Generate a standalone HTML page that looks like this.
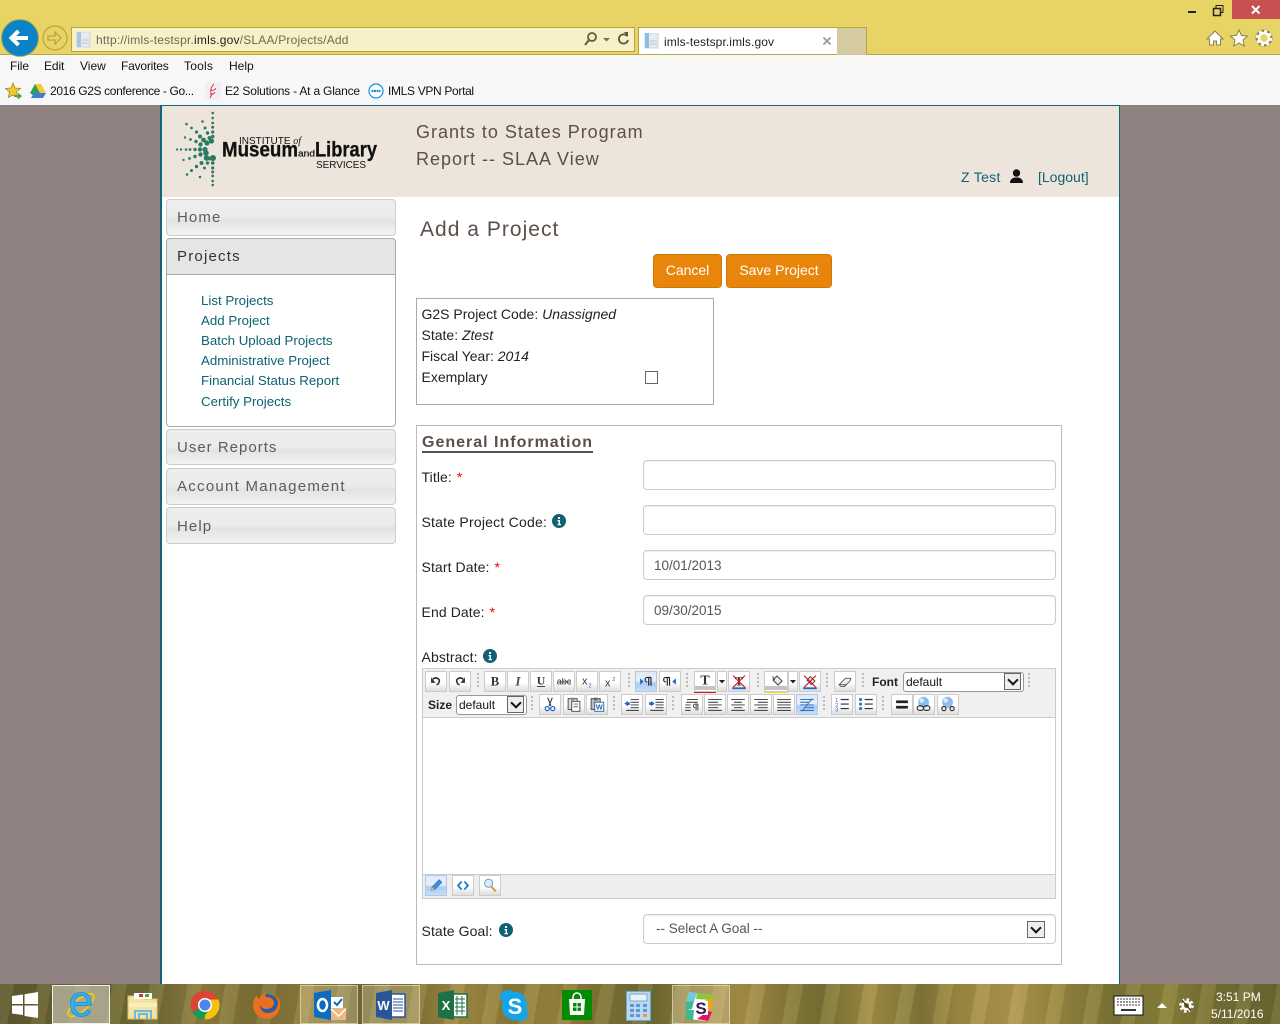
<!DOCTYPE html>
<html><head><meta charset="utf-8"><title>Add a Project</title>
<style>
html,body{margin:0;padding:0}
body{width:1280px;height:1024px;position:relative;overflow:hidden;background:#8f8280;font-family:"Liberation Sans",sans-serif;font-size:14px;color:#222}
.a,.t,.b,.inp,.sep,.dd{position:absolute}
.t{white-space:nowrap;line-height:16px}
.c{font-size:12px;color:#111;font-family:"Liberation Sans",sans-serif}
.f{letter-spacing:-.27px}
.nav{position:absolute;left:166px;width:228px;border:1px solid #ccc;border-radius:4px;background:linear-gradient(#eee 0,#ebebeb 50%,#e2e2e2 58%,#f3f3f3 100%);color:#5c5c5c;font-size:15px;letter-spacing:1.1px;box-sizing:content-box}
.nav span{position:absolute;left:10px;top:9px;line-height:18px}
.l{left:201px;color:#0e6272;font-size:13.3px}
.lb{left:421.500px;letter-spacing:.1px}
.inp{left:643px;width:411px;height:28px;border:1px solid #ccc;border-radius:4px;background:#fff;box-shadow:inset 0 1px 1px rgba(0,0,0,.07);color:#555;font-size:13.500px;line-height:30px;text-indent:10px}
.red{color:#f00}
.b{width:20px;height:19px;border:1px solid #ccc;background:linear-gradient(#fff 0,#fff 55%,#ddd 100%);box-sizing:content-box;overflow:hidden}
.b svg{position:absolute;left:0;top:0;width:20px;height:19px}
.on{background:linear-gradient(#dbe9fb 0,#e8f1fc 45%,#a9cdf6 60%,#c5ddfa 100%);border-color:#b6c8dc}
.sep{width:2px;height:16px;background:repeating-linear-gradient(#bbb 0,#bbb 2px,transparent 2px,transparent 4px)}
.dd{width:17px;height:17px;border:1px solid #666;background:#eee;box-sizing:border-box}
.dd:after{content:"";position:absolute;left:4px;top:2px;width:6px;height:6px;border-right:2px solid #111;border-bottom:2px solid #111;transform:rotate(45deg)}
.i{position:absolute;width:14px;height:14px}
.task{position:absolute}
</style></head>
<body>
<!-- browser chrome -->
<div class="a" style="left:0;top:0;width:1280px;height:54px;background:#e8d464"></div>
<div class="a" style="left:0;top:54px;width:1280px;height:1px;background:#b9a83f"></div>
<div class="a" style="left:0;top:55px;width:1280px;height:50px;background:#f7f7f7"></div>
<div class="a" style="left:0;top:105px;width:1280px;height:1px;background:#8a7f7d"></div>

<svg class="a" style="left:0;top:18px" width="72" height="40">
 <circle cx="20" cy="20" r="18.500" fill="#0a84c6" stroke="#b9a83f" stroke-width="1"/>
 <path d="M28 20H12M18.500 13L11.500 20L18.500 27" fill="none" stroke="#fff" stroke-width="4"/>
 <circle cx="55" cy="20" r="12" fill="#e8d464" stroke="#b5a440" stroke-width="1.200"/>
 <path d="M48 18h7v-4l6 6-6 6v-4h-7z" fill="none" stroke="#b5a440" stroke-width="1.200"/>
</svg>
<div class="a" style="left:71px;top:27px;width:562px;height:23px;background:#f8f0c6;border:1px solid #b5a440"></div>
<svg class="a" style="left:76px;top:32px" width="16" height="16"><rect x="1" y="0" width="13" height="15" fill="#e6ebf2" stroke="#cfd6df"/><rect x="1" y="0" width="4" height="15" fill="#a5c6e6"/><path d="M6 8h7M6 11h7" stroke="#b8c4d2"/></svg>
<div class="t" style="left:96px;top:32px;font-size:12px;letter-spacing:.2px;color:#6d6a55">http://imls-testspr.<span style="color:#222">imls.gov</span>/SLAA/Projects/Add</div>
<svg class="a" style="left:583px;top:30px" width="48" height="18">
 <circle cx="9" cy="7" r="4" fill="none" stroke="#5e5a3c" stroke-width="1.800"/><path d="M6 10L2 15" stroke="#5e5a3c" stroke-width="2"/>
 <path d="M20 8h7l-3.500 3.500z" fill="#76714e"/>
 <path d="M44 6a4.600 4.600 0 1 0 1 4" fill="none" stroke="#5e5a3c" stroke-width="1.800"/><path d="M41 2l4 0 0 5z" fill="#5e5a3c"/>
</svg>
<div class="a" style="left:638px;top:27px;width:198px;height:26px;background:#fff;border:1px solid #b5a440;border-bottom:0;box-sizing:content-box"></div>
<div class="a" style="left:837px;top:27px;width:29px;height:27px;background:#d4cba0;border-right:1px solid #b5a440;border-top:1px solid #b5a440"></div>
<svg class="a" style="left:644px;top:33px" width="16" height="16"><rect x="1" y="0" width="13" height="15" fill="#e6ebf2" stroke="#cfd6df"/><rect x="1" y="0" width="4" height="15" fill="#8fbbe3"/><path d="M6 8h7M6 11h7" stroke="#b8c4d2"/></svg>
<div class="t" style="left:664px;top:34px;font-size:12px;letter-spacing:.1px;color:#222">imls-testspr.imls.gov</div>
<svg class="a" style="left:821px;top:35px" width="12" height="12"><path d="M2.500 2.500l7 7M9.500 2.500l-7 7" stroke="#999" stroke-width="1.800"/></svg>

<div class="a" style="left:1188px;top:11px;width:8px;height:2px;background:#222"></div>
<svg class="a" style="left:1212px;top:4px" width="14" height="14"><rect x="4" y="1.500" width="7" height="7" fill="none" stroke="#222"/><rect x="1.500" y="4.500" width="7" height="7" fill="#e8d464" stroke="#222" stroke-width="1.500"/></svg>
<div class="a" style="left:1232px;top:0;width:48px;height:19px;background:#c75050"></div>
<svg class="a" style="left:1250px;top:4px" width="12" height="12"><path d="M2 2l7.500 7.500M9.500 2L2 9.500" stroke="#fff" stroke-width="2"/></svg>
<svg class="a" style="left:1205px;top:28px" width="70" height="20">
 <path d="M10 3L2 11h2.500v6h4v-4h3v4h4v-6H18z" fill="#fff" stroke="#8c8251" stroke-width="1"/>
 <path d="M34 2l2.500 5.500 6 .6-4.500 4 1.300 6L34 15l-5.300 3 1.300-6-4.500-4 6-.6z" fill="#fff" stroke="#8c8251" stroke-width="1"/>
 <circle cx="59" cy="10" r="7" fill="none" stroke="#8c8251" stroke-width="3"/>
 <circle cx="59" cy="10" r="5" fill="none" stroke="#fff" stroke-width="2.400"/><circle cx="59" cy="10" r="7" fill="none" stroke="#fff" stroke-width="2.400" stroke-dasharray="3 2.500"/>
</svg>

<div class="t c" style="left:10px;top:58px;letter-spacing:-.1px">File</div>
<div class="t c" style="left:44px;top:58px;letter-spacing:-.1px">Edit</div>
<div class="t c" style="left:80px;top:58px">View</div>
<div class="t c" style="left:121px;top:58px;letter-spacing:-.2px">Favorites</div>
<div class="t c" style="left:184px;top:58px;letter-spacing:.2px">Tools</div>
<div class="t c" style="left:229px;top:58px">Help</div>

<svg class="a" style="left:5px;top:82px" width="18" height="18"><path d="M8 1l2 5 5.500.5-4 3.500 1.200 5.500L8 13l-4.700 2.500L4.500 10l-4-3.500L6 6z" fill="#f2c82f" stroke="#a68a1f" stroke-width=".8"/><path d="M9 13h4v-2.500l4 3.500-4 3.500V15H9z" fill="#4aa83d"/></svg>
<svg class="a" style="left:29px;top:83px" width="18" height="16"><path d="M6 1h6l5 9h-6z" fill="#f8c82c"/><path d="M6 1l5 9-3 5L1 10z" fill="#2e9e52"/><path d="M5 10h12l-3 5H2z" fill="#3b7de0"/></svg>
<div class="t c f" style="left:50px;top:83px;letter-spacing:-.36px">2016 G2S conference - Go...</div>
<svg class="a" style="left:205px;top:82px" width="16" height="18"><rect width="16" height="18" fill="#f1eef5"/><path d="M9 2c-4 4-4 8-2 10l-2 4M6 8c2 1 4 0 5-2M5 12c2 1 4 0 5-2" fill="none" stroke="#d8424a" stroke-width="1"/></svg>
<div class="t c f" style="left:225px;top:83px;letter-spacing:-.2px">E2 Solutions - At a Glance</div>
<svg class="a" style="left:368px;top:83px" width="16" height="16"><circle cx="8" cy="8" r="7" fill="#fff" stroke="#1a8fd0" stroke-width="1.200"/><path d="M3.500 8h9" stroke="#1a8fd0" stroke-width="2.200" stroke-dasharray="2 .5"/></svg>
<div class="t c f" style="left:388px;top:83px;letter-spacing:-.33px">IMLS VPN Portal</div>

<!-- page container -->
<div class="a" style="left:160px;top:105px;width:960px;height:879px;background:#fff;box-sizing:border-box;border-left:2px solid #0e6676;border-right:1px solid #0e6676;border-top:1px solid #0e6676"></div>
<div class="a" style="left:162px;top:106px;width:957px;height:91px;background:#ede5db"></div>

<!-- logo -->
<svg class="a" style="left:170px;top:108px" width="215" height="84">
 <g fill="#2d7a63">
  <circle cx="42.700" cy="5" r="1.300"/><circle cx="42.700" cy="10" r="1.300"/><circle cx="42.700" cy="15" r="1.400"/><circle cx="42.700" cy="19.300" r="1.500"/><circle cx="42.700" cy="24" r="1.600"/><circle cx="42.700" cy="28.500" r="1.800"/><circle cx="41.500" cy="33" r="2.600"/>
  <circle cx="43" cy="50" r="3"/><circle cx="42.700" cy="55" r="1.800"/><circle cx="42.700" cy="60" r="1.600"/><circle cx="42.700" cy="64" r="1.500"/><circle cx="42.700" cy="68" r="1.400"/><circle cx="42.700" cy="73" r="1.300"/><circle cx="42.700" cy="77" r="1.300"/>
  <circle cx="7" cy="41.500" r="1.100"/><circle cx="11" cy="41.500" r="1.200"/><circle cx="16" cy="41.500" r="1.300"/><circle cx="20" cy="41.500" r="1.400"/><circle cx="25" cy="41.500" r="1.700"/><circle cx="30" cy="41.500" r="2.200"/><circle cx="35" cy="41.500" r="2.600"/>
  <circle cx="16.500" cy="16" r="1.300"/><circle cx="21.500" cy="20" r="1.400"/><circle cx="26.500" cy="24" r="1.600"/><circle cx="30" cy="28.500" r="2"/><circle cx="33.500" cy="32" r="2.400"/><circle cx="37" cy="35" r="2.600"/>
  <circle cx="32.500" cy="13.500" r="1.300"/><circle cx="35" cy="20" r="1.500"/><circle cx="37.500" cy="25" r="1.700"/><circle cx="39.500" cy="30" r="2"/>
  <circle cx="15" cy="29.500" r="1.200"/><circle cx="20.500" cy="31.500" r="1.400"/><circle cx="26" cy="33.500" r="1.700"/><circle cx="30.500" cy="36.500" r="2.200"/>
  <circle cx="13.500" cy="52" r="1.200"/><circle cx="19.500" cy="50.500" r="1.400"/><circle cx="25" cy="48.500" r="1.700"/><circle cx="30.500" cy="46.500" r="2.200"/><circle cx="36" cy="45" r="2.800"/>
  <circle cx="17" cy="66.500" r="1.300"/><circle cx="21.500" cy="62.500" r="1.500"/><circle cx="26.500" cy="58.500" r="1.700"/><circle cx="31.500" cy="55" r="2"/><circle cx="36.500" cy="50" r="2.800"/>
  <circle cx="30" cy="69" r="1.300"/><circle cx="34.500" cy="60" r="1.500"/><circle cx="37.500" cy="55" r="1.700"/><circle cx="40" cy="50.500" r="2"/>
 </g>
 <text x="69" y="36" font-family="Liberation Sans" font-size="10" fill="#111" textLength="62" lengthAdjust="spacingAndGlyphs">INSTITUTE <tspan font-style="italic" font-family="Liberation Serif">of</tspan></text>
 <text x="52" y="48.500" font-family="Liberation Sans" font-size="21.500" font-weight="bold" fill="#111" stroke="#111" stroke-width=".3" textLength="76" lengthAdjust="spacingAndGlyphs">Museum</text>
 <text x="128" y="48.500" font-family="Liberation Sans" font-size="9" fill="#111" stroke="#111" stroke-width=".2" textLength="17" lengthAdjust="spacingAndGlyphs">and</text>
 <text x="145" y="48.500" font-family="Liberation Sans" font-size="21.500" font-weight="bold" fill="#111" stroke="#111" stroke-width=".3" textLength="62" lengthAdjust="spacingAndGlyphs">Library</text>
 <text x="146" y="60" font-family="Liberation Sans" font-size="10" fill="#111" textLength="50" lengthAdjust="spacingAndGlyphs">SERVICES</text>
</svg>

<div class="t" style="left:416px;top:123px;font-size:18px;line-height:18px;letter-spacing:.98px;color:#5c4f4a">Grants to States Program</div>
<div class="t" style="left:416px;top:150px;font-size:18px;line-height:18px;letter-spacing:1px;color:#5c4f4a">Report -- SLAA View</div>
<div class="t" style="left:961px;top:169px;letter-spacing:.3px;color:#0e6272">Z Test</div>
<svg class="a" style="left:1009px;top:169px" width="15" height="15"><circle cx="7.500" cy="4" r="3.700" fill="#111"/><path d="M1 14c0-4 3-5 4.500-5.500h4C11 9 14 10 14 14z" fill="#111"/></svg>
<div class="t" style="left:1038px;top:169px;color:#0e6272">[Logout]</div>

<!-- sidebar -->
<div class="nav" style="top:199px;height:35px"><span>Home</span></div>
<div class="a" style="left:166px;top:238px;width:228px;height:187px;border:1px solid #aaa;border-radius:4px;background:#fff"></div>
<div class="a" style="left:166px;top:238px;width:228px;height:35px;border:1px solid #aaa;border-radius:4px 4px 0 0;background:#e5e5e5;color:#333;font-size:15px;letter-spacing:1.200px"><span style="position:absolute;left:10px;top:9px;line-height:18px">Projects</span></div>
<div class="t l" style="top:293px">List Projects</div>
<div class="t l" style="top:313px">Add Project</div>
<div class="t l" style="top:333px">Batch Upload Projects</div>
<div class="t l" style="top:353px">Administrative Project</div>
<div class="t l" style="top:373px">Financial Status Report</div>
<div class="t l" style="top:394px">Certify Projects</div>
<div class="nav" style="top:429px;height:34px"><span style="letter-spacing:1px">User Reports</span></div>
<div class="nav" style="top:468px;height:35px"><span style="letter-spacing:1.270px">Account Management</span></div>
<div class="nav" style="top:507px;height:35px"><span style="top:10px">Help</span></div>

<!-- main -->
<div class="t" style="left:420px;top:218px;font-size:21px;line-height:24px;letter-spacing:1.020px;color:#5c4f4a">Add a Project</div>
<div class="a" style="left:653px;top:254px;width:69px;height:34px;background:#e8860c;border:1px solid #d07608;border-radius:4px;box-sizing:border-box;color:#fff;text-align:center;line-height:31px">Cancel</div>
<div class="a" style="left:726px;top:254px;width:106px;height:34px;background:#e8860c;border:1px solid #d07608;border-radius:4px;box-sizing:border-box;color:#fff;text-align:center;line-height:31px">Save Project</div>

<div class="a" style="left:416px;top:298px;width:296px;height:105px;border:1px solid #aaa"></div>
<div class="t" style="left:421.500px;top:306px">G2S Project Code: <i>Unassigned</i></div>
<div class="t" style="left:421.500px;top:327px">State: <i>Ztest</i></div>
<div class="t" style="left:421.500px;top:348px">Fiscal Year: <i>2014</i></div>
<div class="t" style="left:421.500px;top:369px">Exemplary</div>
<div class="a" style="left:645px;top:371px;width:11px;height:11px;border:1px solid #666;background:#fff"></div>

<div class="a" style="left:416px;top:425px;width:644px;height:538px;border:1px solid #bbb"></div>
<div class="t" style="left:422px;top:435px;font-size:16px;font-weight:bold;letter-spacing:1px;color:#5c4f4a">General Information</div>
<div class="a" style="left:422px;top:451px;width:171px;height:2px;background:#5c4f4a"></div>

<div class="t lb" style="top:469px">Title: <span class="red" style="margin-left:1px">*</span></div>
<div class="inp" style="top:460px"></div>
<div class="t" style="left:421.500px;top:514px;letter-spacing:.22px">State Project Code:</div>
<svg class="i" style="left:552px;top:514px" viewBox="0 0 14 14"><circle cx="7" cy="7" r="7" fill="#0e6272"/><path d="M6 3h2v2H6zM5.500 6H8v4h1v1.200H5.500V10h1V7.200h-1z" fill="#fff"/></svg>
<div class="inp" style="top:505px"></div>
<div class="t lb" style="top:559px">Start Date: <span class="red" style="margin-left:1px">*</span></div>
<div class="inp" style="top:550px">10/01/2013</div>
<div class="t lb" style="top:604px">End Date: <span class="red" style="margin-left:1px">*</span></div>
<div class="inp" style="top:595px">09/30/2015</div>
<div class="t lb" style="top:649px">Abstract:</div>
<svg class="i" style="left:483px;top:649px" viewBox="0 0 14 14"><circle cx="7" cy="7" r="7" fill="#0e6272"/><path d="M6 3h2v2H6zM5.500 6H8v4h1v1.200H5.500V10h1V7.200h-1z" fill="#fff"/></svg>

<!-- editor -->
<div class="a" style="left:422px;top:668px;width:632px;height:229px;border:1px solid #ccc;background:#fff"></div>
<div class="a" style="left:423px;top:669px;width:632px;height:48px;background:#f0f0f0;border-bottom:1px solid #ccc"></div>
<div class="a" style="left:423px;top:874px;width:632px;height:23px;background:#eee;border-top:1px solid #ccc"></div>

<!-- row 1 -->
<div class="sep" style="left:477px;top:673px"></div>
<div class="sep" style="left:628px;top:673px"></div>
<div class="sep" style="left:686px;top:673px"></div>
<div class="sep" style="left:757px;top:673px"></div>
<div class="sep" style="left:826px;top:673px"></div>
<div class="sep" style="left:862px;top:673px"></div>
<div class="sep" style="left:1028px;top:673px"></div>

<div class="b" style="left:425px;top:671px"><svg viewBox="0 0 21 21"><path d="M7 8c3-3 8-1 7 3-.5 2-2 3-3 3" fill="none" stroke="#333" stroke-width="1.800"/><path d="M5 6v6h5z" fill="#333"/></svg></div>
<div class="b" style="left:449px;top:671px"><svg viewBox="0 0 21 21"><path d="M14 8c-3-3-8-1-7 3 .5 2 2 3 3 3" fill="none" stroke="#333" stroke-width="1.800"/><path d="M16 6v6h-5z" fill="#333"/></svg></div>
<div class="b" style="left:484px;top:671px"><svg viewBox="0 0 21 21"><text x="10.500" y="15" text-anchor="middle" font-family="Liberation Serif" font-weight="bold" font-size="14" fill="#333">B</text></svg></div>
<div class="b" style="left:507px;top:671px"><svg viewBox="0 0 21 21"><text x="10.500" y="15" text-anchor="middle" font-family="Liberation Serif" font-weight="bold" font-style="italic" font-size="14" fill="#444">I</text></svg></div>
<div class="b" style="left:530px;top:671px"><svg viewBox="0 0 21 21"><text x="10.500" y="14" text-anchor="middle" font-family="Liberation Serif" font-weight="bold" font-size="13" fill="#333">U</text><path d="M6 16h9" stroke="#333"/></svg></div>
<div class="b" style="left:553px;top:671px"><svg viewBox="0 0 21 21"><text x="10.500" y="14" text-anchor="middle" font-family="Liberation Sans" font-size="10" fill="#333">abc</text><path d="M3 11h15" stroke="#333"/></svg></div>
<div class="b" style="left:576px;top:671px"><svg viewBox="0 0 21 21"><text x="5" y="14" font-family="Liberation Sans" font-size="12" fill="#333">x</text><text x="12" y="17" font-family="Liberation Sans" font-size="6" fill="#26c">2</text></svg></div>
<div class="b" style="left:599px;top:671px"><svg viewBox="0 0 21 21"><text x="5" y="16" font-family="Liberation Sans" font-size="12" fill="#333">x</text><text x="13" y="10" font-family="Liberation Sans" font-size="6" fill="#26c">2</text></svg></div>
<div class="b on" style="left:635px;top:671px"><svg viewBox="0 0 21 21"><path d="M4 7l4 3.500L4 14z" fill="#26c"/><path d="M16 6h-4a2.500 2.500 0 0 0 0 5M13.500 6v9M16 6v9" fill="none" stroke="#222" stroke-width="1.300"/></svg></div>
<div class="b" style="left:659px;top:671px"><svg viewBox="0 0 21 21"><path d="M17 7l-4 3.500L17 14z" fill="#26c"/><path d="M10 6H6a2.500 2.500 0 0 0 0 5M7.500 6v9M10 6v9" fill="none" stroke="#222" stroke-width="1.300"/></svg></div>
<div class="b" style="left:694px;top:671px;background:#fff"><svg viewBox="0 0 20 19" preserveAspectRatio="none"><text x="10" y="12.500" text-anchor="middle" font-family="Liberation Serif" font-weight="bold" font-size="14" fill="#333">T</text><rect x="0" y="14" width="20" height="4" fill="#c4c4c4"/></svg></div>
<div class="a" style="left:694px;top:692px;width:22px;height:1px;background:#e01010"></div>
<div class="b" style="left:717px;top:671px;width:8px"><svg viewBox="0 0 8 19" style="width:8px"><path d="M1 8h6l-3 3.500z" fill="#222"/></svg></div>
<div class="b" style="left:728px;top:671px"><svg viewBox="0 0 21 21"><text x="10.500" y="15" text-anchor="middle" font-family="Liberation Serif" font-weight="bold" font-size="14" fill="#444">T</text><path d="M4 4l13 13M17 4L4 17" stroke="#e01010" stroke-width="1.300"/><rect x="3" y="17" width="15" height="2" fill="#26c"/></svg></div>
<div class="b" style="left:764px;top:671px;width:22px;background:#fff"><svg viewBox="0 0 22 19" style="width:22px"><path d="M8 8l4-4 5 5-4 4z" fill="#eee" stroke="#444"/><path d="M8 4c0 2 0 3 2 4" fill="none" stroke="#444"/><rect x="0" y="14" width="22" height="4" fill="#c4c4c4"/></svg></div>
<div class="a" style="left:764px;top:692px;width:24px;height:1px;background:#f5e60a"></div>
<div class="b" style="left:788px;top:671px;width:8px"><svg viewBox="0 0 8 19" style="width:8px"><path d="M1 8h6l-3 3.500z" fill="#222"/></svg></div>
<div class="b" style="left:799px;top:671px"><svg viewBox="0 0 21 21"><path d="M7 9l4-4 5 5-4 4z" fill="#ddd" stroke="#444"/><path d="M4 4l13 13M17 4L4 17" stroke="#e01010" stroke-width="1.300"/><rect x="3" y="17" width="15" height="2" fill="#26c"/></svg></div>
<div class="b" style="left:834px;top:671px"><svg viewBox="0 0 21 21"><path d="M4 14l7-7h6l-1 3-6 6H6z" fill="#eee" stroke="#555"/><path d="M4 14h7l-1 2" fill="none" stroke="#555"/></svg></div>
<div class="t" style="left:872px;top:674px;font-size:12px;font-weight:bold;color:#222">Font</div>
<div class="a" style="left:903px;top:672px;width:119px;height:18px;border:1px solid #999;border-radius:3px;background:#fff;font-size:12px;line-height:18px;text-indent:2px;color:#111">default</div>
<div class="dd" style="left:1004px;top:673px"></div>

<!-- row 2 -->
<div class="t" style="left:428px;top:697px;font-size:12px;font-weight:bold;color:#222">Size</div>
<div class="a" style="left:456px;top:695px;width:69px;height:18px;border:1px solid #999;border-radius:3px;background:#fff;font-size:12px;line-height:18px;text-indent:2px;color:#111">default</div>
<div class="dd" style="left:507px;top:696px"></div>
<div class="sep" style="left:531px;top:696px"></div>
<div class="sep" style="left:613px;top:696px"></div>
<div class="sep" style="left:672px;top:696px"></div>
<div class="sep" style="left:823px;top:696px"></div>
<div class="sep" style="left:882px;top:696px"></div>

<div class="b" style="left:539px;top:694px"><svg viewBox="0 0 21 21"><path d="M8 3l3.500 9M13 3L9.500 12" stroke="#333" stroke-width="1.200"/><circle cx="7.500" cy="15" r="2.300" fill="none" stroke="#26c" stroke-width="1.300"/><circle cx="13.500" cy="15" r="2.300" fill="none" stroke="#26c" stroke-width="1.300"/></svg></div>
<div class="b" style="left:563px;top:694px"><svg viewBox="0 0 21 21"><rect x="4" y="4" width="10" height="12" fill="#ddd" stroke="#444"/><rect x="7" y="3" width="4" height="3" fill="#888"/><rect x="8" y="7" width="9" height="11" fill="#fff" stroke="#444"/><path d="M10 10h5M10 13h5" stroke="#666"/></svg></div>
<div class="b" style="left:586px;top:694px"><svg viewBox="0 0 21 21"><rect x="4" y="4" width="10" height="12" fill="#bbb" stroke="#444"/><rect x="7" y="3" width="4" height="3" fill="#666"/><rect x="8" y="8" width="10" height="10" fill="#fff" stroke="#26a"/><text x="13" y="16" text-anchor="middle" font-family="Liberation Sans" font-weight="bold" font-size="8" fill="#26a">W</text></svg></div>
<div class="b" style="left:621px;top:694px"><svg viewBox="0 0 21 21"><path d="M9 5h9M9 8h9M9 11h9M9 14h9M4 17h14" stroke="#333"/><path d="M2 9.500L6 6.500V8h2v3H6v1.500z" fill="#26c"/></svg></div>
<div class="b" style="left:645px;top:694px"><svg viewBox="0 0 21 21"><path d="M10 5h9M10 8h9M10 11h9M10 14h9M4 17h15" stroke="#333"/><path d="M9 9.500L5 6.500V8H3v3h2v1.500z" fill="#26c"/></svg></div>
<div class="b" style="left:681px;top:694px"><svg viewBox="0 0 21 21"><path d="M5 5h12M4 8h13M3 11h6M3 14h6M3 17h6" stroke="#333"/><path d="M17 10h-3a2 2 0 0 0 0 4M15 10v7M17 10v7" fill="none" stroke="#333"/></svg></div>
<div class="b" style="left:704px;top:694px"><svg viewBox="0 0 21 21"><path d="M3 5h15M3 8h11M3 11h15M3 14h11M3 17h15" stroke="#333"/></svg></div>
<div class="b" style="left:727px;top:694px"><svg viewBox="0 0 21 21"><path d="M3 5h15M6 8h9M3 11h15M6 14h9M3 17h15" stroke="#333"/></svg></div>
<div class="b" style="left:750px;top:694px"><svg viewBox="0 0 21 21"><path d="M3 5h15M7 8h11M3 11h15M7 14h11M3 17h15" stroke="#333"/></svg></div>
<div class="b" style="left:773px;top:694px"><svg viewBox="0 0 21 21"><path d="M3 5h15M3 8h15M3 11h15M3 14h15M3 17h15" stroke="#333"/></svg></div>
<div class="b on" style="left:796px;top:694px"><svg viewBox="0 0 21 21"><path d="M3 5h15M3 8h9M3 11h15M9 14h9M3 17h15" stroke="#2a64b0"/><path d="M16 4L5 18" stroke="#2a64b0"/></svg></div>
<div class="b" style="left:831px;top:694px"><svg viewBox="0 0 21 21"><path d="M9 5h9M9 10h9M9 15h9" stroke="#333" stroke-width="1.300"/><text x="3" y="8" font-family="Liberation Sans" font-size="6" fill="#26c">1</text><text x="3" y="13" font-family="Liberation Sans" font-size="6" fill="#26c">2</text><text x="3" y="18" font-family="Liberation Sans" font-size="6" fill="#26c">3</text></svg></div>
<div class="b" style="left:855px;top:694px"><svg viewBox="0 0 21 21"><path d="M9 5h9M9 10h9M9 15h9" stroke="#333" stroke-width="1.300"/><rect x="3" y="3.500" width="3" height="3" fill="#26c"/><rect x="3" y="8.500" width="3" height="3" fill="#26c"/><rect x="3" y="13.500" width="3" height="3" fill="#26c"/></svg></div>
<div class="b" style="left:891px;top:694px"><svg viewBox="0 0 21 21"><rect x="4" y="6" width="13" height="3" fill="#222"/><rect x="4" y="12" width="13" height="3" fill="#222"/></svg></div>
<div class="b" style="left:913px;top:694px"><svg viewBox="0 0 21 21"><circle cx="10" cy="8" r="6" fill="#8fbcf0"/><circle cx="8" cy="6" r="2.500" fill="#dcebfb"/><rect x="3" y="12" width="7" height="5" rx="2.500" fill="none" stroke="#333" stroke-width="1.300"/><rect x="10" y="12" width="7" height="5" rx="2.500" fill="none" stroke="#333" stroke-width="1.300"/></svg></div>
<div class="b" style="left:937px;top:694px"><svg viewBox="0 0 21 21"><circle cx="10" cy="8" r="6" fill="#8fbcf0"/><circle cx="8" cy="6" r="2.500" fill="#dcebfb"/><circle cx="6" cy="15" r="2.300" fill="none" stroke="#333" stroke-width="1.300"/><circle cx="15" cy="15" r="2.300" fill="none" stroke="#333" stroke-width="1.300"/></svg></div>

<!-- bottom mode buttons -->
<div class="b on" style="left:425px;top:875px"><svg viewBox="0 0 21 21"><path d="M5 16l1-4 8-8 3 3-8 8z" fill="#3f8fd8" stroke="#2a64b0" stroke-width=".6"/><path d="M5 16l1-4 3 3z" fill="#f0c040"/></svg></div>
<div class="b" style="left:452px;top:875px"><svg viewBox="0 0 21 21"><path d="M9 6l-4 4.500L9 15M12 6l4 4.500L12 15" fill="none" stroke="#1c7fc0" stroke-width="2"/></svg></div>
<div class="b" style="left:479px;top:875px"><svg viewBox="0 0 21 21"><circle cx="9" cy="8" r="4.500" fill="#dcebfb" stroke="#7aa4cc" stroke-width="1.200"/><path d="M12 12l5 5" stroke="#d0a030" stroke-width="2.200"/></svg></div>

<div class="t lb" style="top:923px">State Goal:</div>
<svg class="i" style="left:499px;top:923px" viewBox="0 0 14 14"><circle cx="7" cy="7" r="7" fill="#0e6272"/><path d="M6 3h2v2H6zM5.500 6H8v4h1v1.200H5.500V10h1V7.200h-1z" fill="#fff"/></svg>
<div class="inp" style="top:914px;text-indent:12px;font-size:13.500px;line-height:27px;color:#555">-- Select A Goal --</div>
<div class="dd" style="left:1027px;top:921px;width:18px;height:17px"></div>

<!-- taskbar -->
<div class="a" style="left:0;top:984px;width:1280px;height:40px;background:linear-gradient(90deg,#5c5730 0,#6b6534 8%,#6f6a38 12%,#8e7c3e 16%,#7a7038 20%,#8c7a3a 24%,#6e6a36 28%,#7e7336 32%,#a08a44 36%,#8a7b3c 40%,#98843e 43%,#7c7336 47%,#6d6a32 51%,#958442 55%,#a88f48 58%,#8b7d3c 61%,#757135 64%,#a08c45 68%,#80773a 72%,#9e8a42 75%,#b09750 79%,#94853f 83%,#7b7437 87%,#878039 91%,#746e35 95%,#6a6632 100%)"></div>
<div class="a" style="left:0;top:984px;width:1280px;height:40px;background:repeating-linear-gradient(100deg,rgba(255,240,170,.09) 0,rgba(255,240,170,.09) 14px,rgba(60,50,10,.08) 14px,rgba(60,50,10,.08) 37px)"></div>
<svg class="task" style="left:12px;top:992px" width="28" height="26"><path d="M0 4l11-1.500V12H0zM12.500 2.300L26 0v12H12.500zM0 13.500h11V23L0 21.500zM12.500 13.500H26V26l-13.500-2z" fill="#fff"/></svg>
<div class="a" style="left:52px;top:985px;width:56px;height:37px;background:rgba(205,205,190,.62);border:1px solid #f0f0e8"></div>
<div class="a" style="left:300px;top:985px;width:56px;height:37px;background:rgba(230,215,170,.34);border:1px solid rgba(240,230,200,.6)"></div>
<div class="a" style="left:362px;top:985px;width:56px;height:37px;background:rgba(230,215,170,.34);border:1px solid rgba(240,230,200,.6)"></div>
<div class="a" style="left:672px;top:985px;width:56px;height:37px;background:rgba(230,215,170,.34);border:1px solid rgba(240,230,200,.6)"></div>
<!-- IE -->
<svg class="task" style="left:64px;top:988px" width="34" height="34"><ellipse cx="17" cy="17" rx="16" ry="6" transform="rotate(-40 17 17)" fill="none" stroke="#f2c21e" stroke-width="2"/><text x="17" y="28" text-anchor="middle" font-family="Liberation Sans" font-size="44" fill="#35aef0" stroke="#1a8fd8" stroke-width=".8">e</text></svg>
<!-- folder -->
<svg class="task" style="left:126px;top:990px" width="34" height="30"><path d="M2 6h12l3 3h14v20H2z" fill="#f3e2a0" stroke="#d9c06a"/><rect x="8" y="3" width="18" height="6" fill="#fff"/><rect x="13" y="4" width="4" height="3" fill="#c33"/><rect x="19" y="4" width="4" height="3" fill="#4a4"/><rect x="3" y="13" width="28" height="4" fill="#fbeeb8"/><path d="M9 29V21h16v8M13 29v-5h8v5" fill="none" stroke="#6db8e6" stroke-width="2"/></svg>
<!-- chrome -->
<svg class="task" style="left:190px;top:990px" width="30" height="30" viewBox="0 0 30 30"><circle cx="15" cy="15" r="14.500" fill="#dc4437"/><path d="M15 15L2.500 22.500A14.500 14.500 0 0 0 15 29.500L21 22z" fill="#2f9e44"/><path d="M15 15l0 14.500A14.500 14.500 0 0 0 28.500 9.500L15 9.500z" fill="#f4c20d"/><path d="M15 15L2.500 22.500A14.500 14.500 0 0 0 12 29.200l6-8z" fill="#0f9d58"/><circle cx="15" cy="15" r="7" fill="#fff"/><circle cx="15" cy="15" r="5.500" fill="#4a86e8"/></svg>
<!-- firefox -->
<svg class="task" style="left:252px;top:990px" width="30" height="30" viewBox="0 0 30 30"><circle cx="15" cy="15" r="11" fill="#2b5d9e"/><path d="M22 3c5 4 7 9 6 14-1 7-7 12-13 12C7 29 1 23 1 15c0-4 2-8 4-10 0 2 1 3 2 4 1-3 4-6 7-7-1 2-1 4 0 5 4 0 8 2 8 6 0 3-3 6-7 6s-6-2-7-4c0 5 3 8 8 8 6 0 10-5 10-10 0-4-2-7-4-10z" fill="#e8701f"/></svg>
<!-- outlook -->
<svg class="task" style="left:314px;top:990px" width="32" height="30"><path d="M0 3L17 0v30L0 27z" fill="#0d6cc0"/><ellipse cx="8.500" cy="15" rx="4.500" ry="6" fill="none" stroke="#fff" stroke-width="2.500"/><rect x="17" y="7" width="12" height="11" fill="#fff"/><path d="M20 12l3 3 5-6" fill="none" stroke="#0d6cc0" stroke-width="2"/><path d="M17 18h15v12H17z" fill="#eab980"/><path d="M17 19l7.500 7 7.500-7" fill="none" stroke="#fff" stroke-width="1.500"/></svg>
<!-- word -->
<svg class="task" style="left:376px;top:990px" width="30" height="30"><rect x="12" y="4" width="17" height="23" fill="#fff" stroke="#2a5699" stroke-width="1.500"/><path d="M17 9h10M17 12h10M17 15h10M17 18h10M17 21h10" stroke="#2a5699"/><path d="M0 3L16 0v30L0 27z" fill="#2a5699"/><text x="7.500" y="20" text-anchor="middle" font-family="Liberation Sans" font-weight="bold" font-size="13" fill="#fff">W</text></svg>
<!-- excel -->
<svg class="task" style="left:438px;top:990px" width="30" height="30"><rect x="12" y="4" width="17" height="23" fill="#fff" stroke="#1e7145" stroke-width="1.500"/><path d="M17 9h10M17 13h10M17 17h10M17 21h10M19 6v19M24 6v19" stroke="#1e7145"/><path d="M0 3L16 0v30L0 27z" fill="#1e7145"/><text x="8" y="20" text-anchor="middle" font-family="Liberation Sans" font-weight="bold" font-size="13" fill="#fff">X</text></svg>
<!-- skype -->
<svg class="task" style="left:500px;top:990px" width="30" height="32"><path d="M8 0c2 0 4 1 5 2 8-1 14 5 14 13 0 1 0 3-1 4 1 1 2 3 2 5 0 4-4 7-8 7-2 0-3-1-5-1C7 30 2 24 2 16c0-1 0-3 1-4-2-2-3-3-3-5 0-4 4-7 8-7z" fill="#14a5e8"/><text x="15" y="24" text-anchor="middle" font-family="Liberation Sans" font-weight="bold" font-size="22" fill="#fff">S</text></svg>
<!-- store -->
<svg class="task" style="left:562px;top:990px" width="30" height="30"><rect width="30" height="30" fill="#048a04"/><path d="M7 9h16l-1 16H8z" fill="#fff"/><path d="M11 9V7a4 4 0 0 1 8 0v2" fill="none" stroke="#fff" stroke-width="1.500"/><path d="M11 13h3.500v3.500H11zM15.500 13H19v3.500h-3.500zM11 17.500h3.500V21H11zM15.500 17.500H19V21h-3.500z" fill="#048a04"/></svg>
<!-- calc -->
<svg class="task" style="left:626px;top:991px" width="25" height="30"><rect x=".5" y=".5" width="24" height="29" fill="#bcd8f0" stroke="#6fa6d6"/><rect x="4" y="3" width="17" height="7" fill="#e8f2fb" stroke="#7fa6c6"/><g fill="#5f98cc"><rect x="4" y="13" width="4" height="3"/><rect x="10" y="13" width="4" height="3"/><rect x="17" y="13" width="4" height="3"/><rect x="4" y="18" width="4" height="3"/><rect x="10" y="18" width="4" height="3"/><rect x="17" y="18" width="4" height="3"/><rect x="4" y="23" width="4" height="3"/><rect x="10" y="23" width="4" height="3"/></g><rect x="17" y="23" width="4" height="3" fill="#e89a3c"/></svg>
<!-- slack -->
<svg class="task" style="left:686px;top:991px" width="30" height="30"><path d="M3 1l22 3-4 26-19-2z" fill="#fff"/><path d="M3 1l8 1-3 9L0 10z" fill="#6ecadc"/><path d="M11 2l17 2-1 5-17-1z" fill="#89c540"/><path d="M20 8l8-1-3 14-7-2z" fill="#e9a820"/><path d="M22 20l4 1-4 9-11-2z" fill="#e01563"/><path d="M0 11l8-1-2 8-6 1zM0 19l8 0-1 10-7-1z" fill="#3eb890"/><rect x="8" y="10" width="14" height="14" fill="#fff"/><text x="15" y="23" text-anchor="middle" font-family="Liberation Sans" font-weight="bold" font-size="17" fill="#3d1a4a">S</text></svg>

<!-- tray -->
<svg class="task" style="left:1113px;top:995px" width="32" height="22"><rect x="1" y="1" width="29" height="19" fill="#fff" stroke="#111"/><path d="M4 4h23M4 7h23M4 10h23" stroke="#333" stroke-dasharray="2 1"/><path d="M8 15h15" stroke="#333" stroke-width="2"/></svg>
<svg class="task" style="left:1157px;top:1002px" width="10" height="6"><path d="M0 6l5-5 5 5z" fill="#fff"/></svg>
<svg class="task" style="left:1179px;top:997px" width="15" height="17"><circle cx="7.500" cy="8.500" r="3.800" fill="none" stroke="#fff" stroke-width="2.400"/><circle cx="7.500" cy="8.500" r="6" fill="none" stroke="#fff" stroke-width="2.600" stroke-dasharray="2.400 2.300"/><path d="M3 3l9 11" stroke="#222" stroke-width="1"/></svg>
<div class="t" style="left:1216px;top:989px;font-size:12px;color:#fff">3:51 PM</div>
<div class="t" style="left:1211px;top:1006px;font-size:12px;color:#fff">5/11/2016</div>
</body></html>
